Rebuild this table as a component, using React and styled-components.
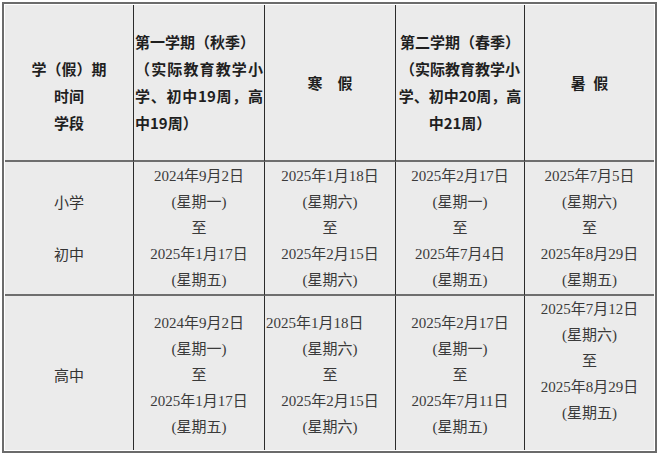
import React from 'react';
import styled, { createGlobalStyle } from 'styled-components';

const GlobalStyle = createGlobalStyle`
	body {
		margin: 0;
		background: #ffffff;
	}
`;

const Frame = styled.div`
	margin: 2px 0 0 2px;
	width: 655px;
	height: 451px;
	box-sizing: border-box;
	border: 2px solid #6b6b6b;
	padding: 1px;
	background: #ffffff;
`;

const Grid = styled.div`
	display: grid;
	grid-template-columns: 129px 131px 131px 129px 129px;
	grid-template-rows: 157px 134px 154px;
	background: #ebebeb;
`;

const Cell = styled.div`
	box-sizing: border-box;
	border-right: ${(p) => (p.$lastCol ? 'none' : '1px solid #2b2b2b')};
	border-bottom: ${(p) => (p.$lastRow ? 'none' : '2px solid #6e6e6e')};
	display: flex;
	flex-direction: column;
	justify-content: ${(p) => (p.$top ? 'flex-start' : 'center')};
	padding: ${(p) => (p.$lastRow && !p.$top ? '4px 1px 0' : '0 1px')};
	text-align: center;
	overflow: hidden;
`;

const HeadText = styled.div`
	font-family: 'Noto Sans CJK SC', 'Microsoft YaHei', sans-serif;
	font-weight: 700;
	font-size: 15px;
	line-height: 27px;
	color: #1f1f1f;
	padding-bottom: 1px;
	text-align: ${(p) => (p.$justify ? 'justify' : 'center')};
	white-space: pre-wrap;
`;

const Line = styled.div`
	font-family: 'Liberation Serif', 'Noto Sans CJK SC', serif;
	font-size: 15px;
	line-height: 26px;
	color: #3a3a3a;
	white-space: nowrap;
	padding-right: ${(p) => p.$shift || 0}px;
`;

const LevelLine = styled(Line)`
	font-family: 'Noto Sans CJK SC', sans-serif;
	color: #333333;
`;

function Range({ lines, shift }) {
	return lines.map((l, i) => (
		<Line key={i} $shift={i === 0 ? shift : 0}>
			{l || '\u00a0'}
		</Line>
	));
}

const rows = [
	{
		levels: ['小学', '', '初中'],
		ranges: [
			['2024年9月2日', '(星期一)', '至', '2025年1月17日', '(星期五)'],
			['2025年1月18日', '(星期六)', '至', '2025年2月15日', '(星期六)'],
			['2025年2月17日', '(星期一)', '至', '2025年7月4日', '(星期五)'],
			['2025年7月5日', '(星期六)', '至', '2025年8月29日', '(星期五)'],
		],
	},
	{
		levels: ['高中'],
		last: true,
		ranges: [
			['2024年9月2日', '(星期一)', '至', '2025年1月17日', '(星期五)'],
			['2025年1月18日', '(星期六)', '至', '2025年2月15日', '(星期六)'],
			['2025年2月17日', '(星期一)', '至', '2025年7月11日', '(星期五)'],
			['2025年7月12日', '(星期六)', '至', '2025年8月29日', '(星期五)'],
		],
	},
];

export default function App() {
	return (
		<>
			<GlobalStyle />
			<Frame>
				<Grid>
					<Cell>
						<HeadText>{'\u00a0\n学（假）期\n时间\n学段'}</HeadText>
					</Cell>
					<Cell>
						<HeadText $justify>
							第一学期（秋季）
							<br />
							（实际教育教学小学、初中19周，高中19周）
						</HeadText>
					</Cell>
					<Cell>
						<HeadText>寒{'\u3000'}假</HeadText>
					</Cell>
					<Cell>
						<HeadText>
							第二学期（春季）
							<br />
							（实际教育教学小学、初中20周，高中21周）
						</HeadText>
					</Cell>
					<Cell $lastCol>
						<HeadText>暑{'\u2002'}假</HeadText>
					</Cell>

					{rows.map((row, r) => (
						<React.Fragment key={r}>
							<Cell $lastRow={row.last}>
								{row.levels.map((l, i) => (
									<LevelLine key={i}>{l || '\u00a0'}</LevelLine>
								))}
							</Cell>
							{row.ranges.map((lines, c) => (
								<Cell
									key={c}
									$lastRow={row.last}
									$lastCol={c === 3}
									$top={row.last && c === 3}
								>
									<Range lines={lines} shift={row.last && c === 1 ? 32 : 0} />
								</Cell>
							))}
						</React.Fragment>
					))}
				</Grid>
			</Frame>
		</>
	);
}
